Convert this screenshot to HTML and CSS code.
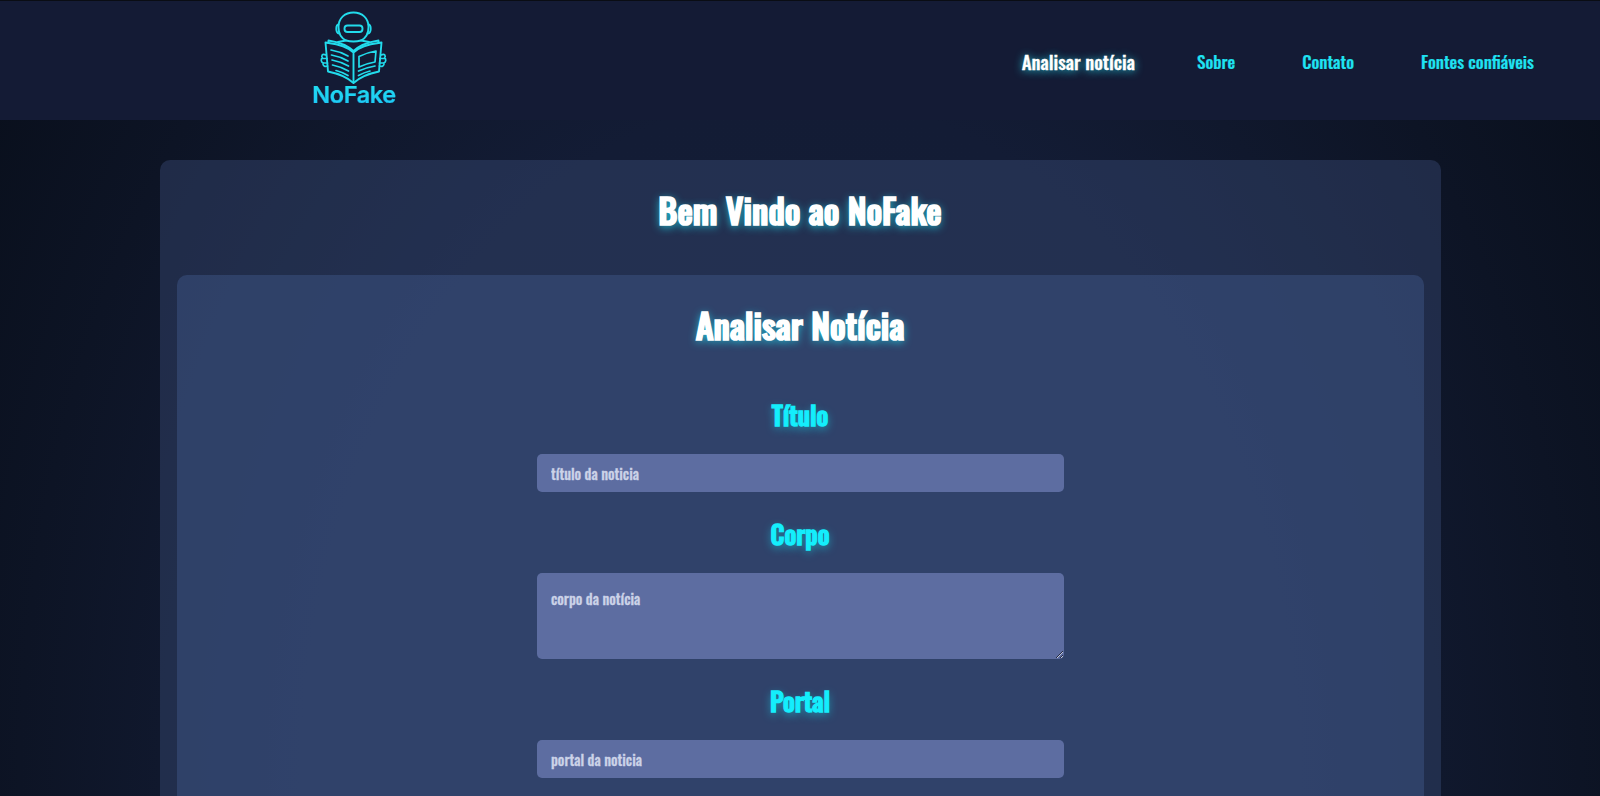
FILE: index.html
```html
<!DOCTYPE html>
<html lang="pt-BR">
<head>
<meta charset="utf-8">
<title>NoFake</title>
<link rel="stylesheet" href="styles.css">
</head>
<body>
<header class="header">
  <a class="logo" href="#">
    <svg class="logo-art" viewBox="0 0 80 80" fill="none" stroke="#22dcec" stroke-width="1.9" stroke-linejoin="round" stroke-linecap="round">
      <path d="M36 32.500C31 30 28.500 25 28.500 19C28.500 10 35 4.500 43.500 4.500S58.500 10 58.500 19C58.500 25 56 30 51 32.500Q43.500 34.500 36 32.500"/>
      <path d="M28.500 16.500C25.500 17 25.500 25 29 25.500M58.500 16.500C61.500 17 61.500 25 58 25.500"/>
      <rect x="34.500" y="17.500" width="18" height="6.500" rx="3"/>
      <path d="M36 32.500L28 34M51 32.500L59 34"/>
      <path d="M43.500 43C37 37 28 34 18.500 32.500V35L15.500 34.500L18 63.500C28 65.500 37 69 43.500 75C50 69 59 65.500 69 63.500L71.500 34.500L68.500 35V32.500C59 34 50 37 43.500 43Z"/>
      <path d="M18.500 35C28 36 38 39.500 43.500 44.500C49 39.500 59 36 68.500 35M43.500 44V74"/>
      <path d="M21 42Q30 43.500 38 48M21.500 47Q30 48.500 38 53M22 52Q30 53.500 38.500 58M22.500 57Q30 58.500 38.500 63M26 62.500Q32 64 38 67.500" stroke-width="1.700"/>
      <path d="M49 48.500Q57 44.500 66 43L65 54Q56 55.500 49 59ZM48.500 63Q56 59.500 65 58M48.500 67.500Q54 64.500 60 63" stroke-width="1.700"/>
      <path d="M16 47C12 45 11 48 12.500 50C10.500 51 11 54 13 55C12.500 58 15 59 17.500 58M13 50.500H17M13.500 55H17.500M71 47C75 45 76 48 74.500 50C76.500 51 76 54 74 55C74.500 58 72 59 69.500 58M74 50.500H70M73.500 55H69.500" stroke-width="1.700"/>
    </svg>
    <span class="logo-name">NoFake</span>
  </a>
  <nav class="nav">
    <a class="nav-link active" href="#">Analisar notícia</a>
    <a class="nav-link" href="#">Sobre</a>
    <a class="nav-link" href="#">Contato</a>
    <a class="nav-link" href="#">Fontes confiáveis</a>
  </nav>
</header>
<main class="container">
  <h1 class="title">Bem Vindo ao NoFake</h1>
  <form class="panel">
    <h1 class="title">Analisar Notícia</h1>
    <label class="label" for="titulo">Título</label>
    <input class="field" id="titulo" placeholder="título da noticia">
    <label class="label" for="corpo">Corpo</label>
    <textarea class="field area" id="corpo" placeholder="corpo da notícia"></textarea>
    <label class="label" for="portal">Portal</label>
    <input class="field" id="portal" placeholder="portal da noticia">
  </form>
</main>
</body>
</html>
```
FILE: styles.css
```css
* { box-sizing: border-box; }
body {
  display: flex;
  flex-direction: column;
  margin: 0;
  height: 796px;
  overflow: hidden;
  font-family: Oswald, "Roboto Condensed", sans-serif;
  background: radial-gradient(ellipse 1000px 1400px at 50% 100%, #141e38 0%, #131c35 50%, #0d1425 78%, #080e1a 100%);
}
.header {
  display: flex;
  justify-content: space-between;
  height: 120px;
  flex: none;
  padding: 0 66px 0 310px;
  border-top: 1px solid #0a0d14;
  background: #141b35;
}
.logo {
  display: flex;
  flex-direction: column;
  align-items: center;
  width: 88px;
  padding-top: 7px;
  text-decoration: none;
}
.logo-art { width: 80px; height: 80px; flex: none; margin-right: 8px; }
.logo-name {
  margin-top: -7px;
  font: 600 23.5px/28px Inter, sans-serif;
  letter-spacing: -.4px;
  color: transparent;
  -webkit-text-stroke: .2px #20d2f2;
  background: linear-gradient(#22e0ec, #1cc4fa);
  background-clip: text;
}
.nav { display: flex; align-items: center; gap: 67px; }
.nav-link {
  font-size: 17.2px;
  font-weight: 500;
  color: #1fe3f2;
  -webkit-text-stroke: .2px #1fe3f2;
  text-decoration: none;
}
.active {
  margin-right: -5px;
  font-size: 18.9px;
  color: #fff;
  -webkit-text-stroke: .3px #fff;
  text-shadow: 0 1px 9px #25cfe0;
}
.container {
  width: 1281px;
  flex: 1;
  min-height: 0;
  margin: 40px auto 0;
  padding: 0 17px;
  border-radius: 10px 10px 0 0;
  background: rgba(54, 72, 114, .46);
  text-align: center;
}
.title {
  margin: 0;
  padding-top: 24px;
  height: 115px;
  font-size: 34.4px;
  line-height: 52px;
  font-weight: 500;
  color: #fff;
  -webkit-text-stroke: 1.7px #fff;
  text-shadow: 0 2px 9px #1fd3e6;
}
.panel {
  display: flex;
  flex-direction: column;
  align-items: center;
  height: 521px;
  overflow: hidden;
  border-radius: 10px 10px 0 0;
  background: rgba(57, 78, 124, .6);
}
.label {
  margin-bottom: 21px;
  font-size: 25.8px;
  line-height: 38px;
  font-weight: 500;
  color: #14eefc;
  -webkit-text-stroke: 1.3px #14eefc;
  text-shadow: 0 3px 9px rgba(20, 220, 240, .65);
}
.panel .title { height: 120px; flex: none; }
.field {
  width: 527px;
  height: 38px;
  flex: none;
  margin: 0 0 22px;
  padding: 0 14.5px;
  border: 0;
  border-radius: 5px;
  background: #5d6da1;
  font: 500 14.4px/20px Oswald, sans-serif;
  color: #fff;
}
.field::placeholder { color: #ccd3e8; -webkit-text-stroke: .3px #ccd3e8; }
.area { height: 86px; padding: 16px 14.5px; resize: both; }
```
